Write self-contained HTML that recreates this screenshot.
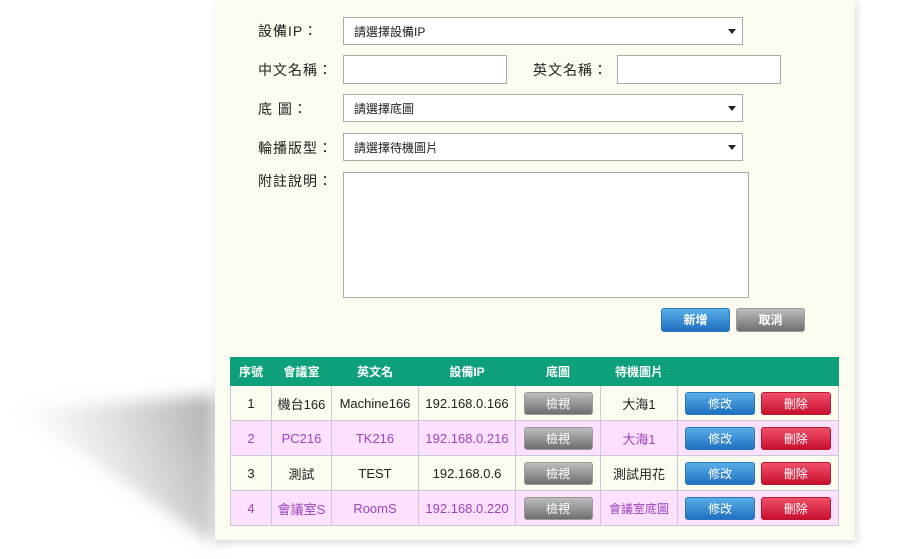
<!DOCTYPE html>
<html><head><meta charset="utf-8"><style>
body{margin:0;width:917px;height:559px;background:#fff;position:relative;overflow:hidden;font-family:"Liberation Sans","Noto Sans CJK TC",sans-serif;}
.shadow{position:absolute;left:0;top:0;width:917px;height:559px;}
.panel{position:absolute;left:215px;top:0;width:640px;height:540px;background:#fbfbef;box-shadow:2px 3px 8px rgba(0,0,0,.15);}
.lbl{position:absolute;left:258px;font-size:14px;color:#222;letter-spacing:1px;line-height:18px;}
.sel,.inp{position:absolute;background:#fff;border:1px solid #aaa;box-sizing:border-box;font-size:12px;color:#222;padding:0 0 0 10px;line-height:28px;}
.sel:after{content:"";position:absolute;right:6px;top:11px;border:4px solid transparent;border-top:5px solid #222;border-bottom:0;}
.btn{position:absolute;box-sizing:border-box;border-radius:3px;color:#fff;font-size:12px;text-align:center;font-weight:bold;}
.blue{background:linear-gradient(#5aaee8,#1f6fbf);border:1px solid #2a78c4;}
.gray{background:linear-gradient(#bdbdbd,#6e6e6e);border:1px solid #999;}
.red{background:linear-gradient(#f0506a,#c8102e);border:1px solid #b51a30;}
table{position:absolute;left:230px;top:357px;border-collapse:collapse;font-size:13px;}
th{background:#0ea07a;color:#fff;height:27px;font-size:12px;padding:0;border:1px solid #0ea07a;}
td{height:34px;text-align:center;border:1px solid #c8c8d8;padding:0;color:#222;position:relative;}
tr.p td{background:#fde0fd;color:#9a44c0;}
.ib{display:inline-block;box-sizing:border-box;height:23px;line-height:23px;border-radius:3px;color:#fff;font-size:12px;vertical-align:middle;}
</style></head><body>
<svg class="shadow" width="917" height="559"><defs><linearGradient id="g" x1="1" y1="0" x2="0" y2="0.3"><stop offset="0" stop-color="#888" stop-opacity=".7"/><stop offset="1" stop-color="#bbb" stop-opacity="0"/></linearGradient><filter id="b"><feGaussianBlur stdDeviation="8"/></filter></defs><polygon points="215,395 20,410 215,545" fill="url(#g)" filter="url(#b)"/></svg>
<div class="panel"></div>
<div class="lbl" style="top:22px">設備IP：</div>
<div class="sel" style="left:343px;top:17px;width:400px;height:28px">請選擇設備IP</div>
<div class="lbl" style="top:61px">中文名稱：</div>
<div class="inp" style="left:343px;top:55px;width:164px;height:29px"></div>
<div class="lbl" style="left:533px;top:61px">英文名稱：</div>
<div class="inp" style="left:617px;top:55px;width:164px;height:29px"></div>
<div class="lbl" style="top:100px">底 圖：</div>
<div class="sel" style="left:343px;top:94px;width:400px;height:28px">請選擇底圖</div>
<div class="lbl" style="top:139px">輪播版型：</div>
<div class="sel" style="left:343px;top:133px;width:400px;height:28px">請選擇待機圖片</div>
<div class="lbl" style="top:172px">附註說明：</div>
<div class="inp" style="left:343px;top:172px;width:406px;height:126px"></div>
<div class="btn blue" style="left:661px;top:308px;width:69px;height:24px;line-height:23px">新增</div>
<div class="btn gray" style="left:736px;top:308px;width:69px;height:24px;line-height:23px">取消</div>
<table>
<tr><th style="width:40px">序號</th><th style="width:59px">會議室</th><th style="width:86px">英文名</th><th style="width:96px">設備IP</th><th style="width:84px">底圖</th><th style="width:76px">待機圖片</th><th style="width:160px"></th></tr>
<tr><td>1</td><td>機台166</td><td>Machine166</td><td>192.168.0.166</td><td><span class="ib gray" style="width:69px">檢視</span></td><td>大海1</td><td><span class="ib blue" style="width:70px">修改</span> <span class="ib red" style="width:70px;margin-left:2px">刪除</span></td></tr>
<tr class="p"><td>2</td><td>PC216</td><td>TK216</td><td>192.168.0.216</td><td><span class="ib gray" style="width:69px">檢視</span></td><td>大海1</td><td><span class="ib blue" style="width:70px">修改</span> <span class="ib red" style="width:70px;margin-left:2px">刪除</span></td></tr>
<tr><td>3</td><td>測試</td><td>TEST</td><td>192.168.0.6</td><td><span class="ib gray" style="width:69px">檢視</span></td><td>測試用花</td><td><span class="ib blue" style="width:70px">修改</span> <span class="ib red" style="width:70px;margin-left:2px">刪除</span></td></tr>
<tr class="p"><td>4</td><td>會議室S</td><td>RoomS</td><td>192.168.0.220</td><td><span class="ib gray" style="width:69px">檢視</span></td><td style="font-size:12px">會議室底圖</td><td><span class="ib blue" style="width:70px">修改</span> <span class="ib red" style="width:70px;margin-left:2px">刪除</span></td></tr>
</table>
</body></html>
